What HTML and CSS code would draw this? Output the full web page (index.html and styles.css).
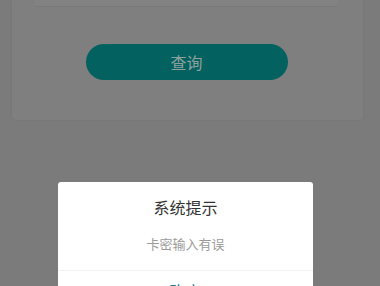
FILE: index.html
```html
<!DOCTYPE html>
<html lang="zh-CN">
<head>
<meta charset="utf-8">
<link rel="stylesheet" href="styles.css">
</head>
<body>
<div class="page">
  <div class="card">
    <div class="input-box"></div>
    <div class="query-btn">查询</div>
  </div>
</div>
<div class="overlay"></div>
<div class="dialog">
  <div class="dialog-title">系统提示</div>
  <div class="dialog-msg">卡密输入有误</div>
  <div class="dialog-footer">确定</div>
</div>
</body>
</html>
```
FILE: styles.css
```css
html, body {
  margin: 0;
  padding: 0;
  width: 380px;
  height: 286px;
  overflow: hidden;
  background: #7b7b7b;
  font-family: "Noto Sans CJK SC", "Noto Sans", sans-serif;
}
.page {
  padding: 0 17px 0 12px;
}
.card {
  background: #7f7f7f;
  border-radius: 0 0 4px 4px;
  box-shadow: 0 0 3px rgba(0,0,0,0.06);
  padding: 0 25px 40px 23px;
}
.input-box {
  height: 6px;
  background: #828282;
  border-bottom: 1px solid #787878;
  border-radius: 0 0 3px 3px;
}
.query-btn {
  margin: 37px auto 0;
  width: 202px;
  height: 36px;
  border-radius: 18px;
  background: #03625f;
  color: #8ea19e;
  font-size: 16px;
  line-height: 36px;
  text-align: center;
}
.overlay {
  position: fixed;
  inset: 0;
  background: rgba(0,0,0,0);
}
.dialog {
  position: fixed;
  left: 58px;
  top: 182px;
  width: 255px;
  background: #fff;
  border-radius: 3px;
  text-align: center;
}
.dialog-title {
  padding-top: 14px;
  font-size: 16px;
  line-height: 22px;
  color: #333;
}
.dialog-msg {
  margin-top: 16px;
  font-size: 13px;
  line-height: 20px;
  color: #9a9a9a;
  padding-bottom: 16px;
  border-bottom: 1px solid #f2f2f2;
}
.dialog-footer {
  font-size: 16px;
  line-height: 40px;
  color: #1d7f95;
}
```
